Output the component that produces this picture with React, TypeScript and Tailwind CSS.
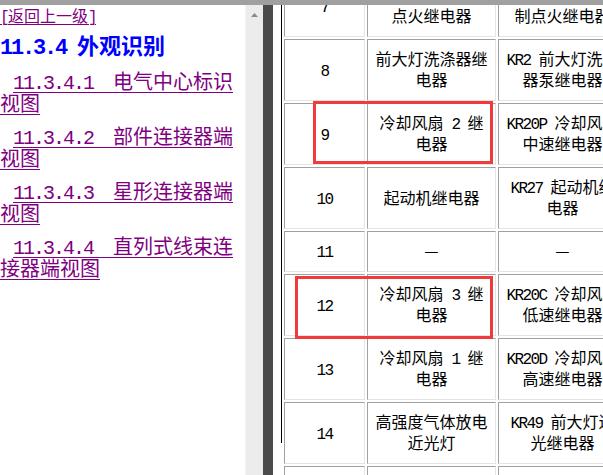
import React from 'react';

// half-width (ASCII) runs get a mono face squeezed to 0.5em, like the SimSun page.
// small line-height so the mono run never stretches the CJK line box
const T = ({ s }: { s: string }) => (
  <>
    {s.split(/([\x20-\x7e\u00a0]+)/).map((part, i) =>
      /^[\x20-\x7e\u00a0]+$/.test(part) ? (
        <span key={i} className="font-['Liberation_Mono',monospace] tracking-[-0.1em] leading-[0.7em]">
          {part}
        </span>
      ) : (
        part
      )
    )}
  </>
);

const links = [
  '11.3.4.1\u00a0\u00a0电气中心标识视图',
  '11.3.4.2\u00a0\u00a0部件连接器端视图',
  '11.3.4.3\u00a0\u00a0星形连接器端视图',
  '11.3.4.4\u00a0\u00a0直列式线束连接器端视图',
];

const rows: [string, string, string][] = [
  ['7', '发动机控制模块点火继电器', 'KR75 发动机控制点火继电器'],
  ['8', '前大灯洗涤器继电器', 'KR2 前大灯洗涤器泵继电器'],
  ['9', '冷却风扇 2 继电器', 'KR20P 冷却风扇中速继电器'],
  ['10', '起动机继电器', 'KR27 起动机继电器'],
  ['11', '—', '—'],
  ['12', '冷却风扇 3 继电器', 'KR20C 冷却风扇低速继电器'],
  ['13', '冷却风扇 1 继电器', 'KR20D 冷却风扇高速继电器'],
  ['14', '高强度气体放电近光灯', 'KR49 前大灯近光继电器'],
  ['15', '喇叭继电器', 'KR3 喇叭继电器'],
];

const cell =
  'border border-t-[#a0a0a0] border-l-[#a0a0a0] border-b-[#e4e4e4] border-r-[#e4e4e4] px-[6px] pt-[8px] pb-[10px] text-center align-middle';

export default function App() {
  return (
    <div className="relative w-[603px] h-[475px] overflow-hidden bg-white flex flex-col font-['Noto_Sans_CJK_SC',sans-serif] text-black">
      <div className="h-[5px] shrink-0 bg-[#a0a0a0]" />
      <div className="flex flex-1 min-h-0">
        {/* left frame */}
        <div className="w-[245px] shrink-0 overflow-hidden">
          <a className="block text-[16px] leading-[20px] text-[#800080] underline decoration-1 underline-offset-[2px] w-max">
            <T s="[返回上一级]" />
          </a>
          <h2 className="mt-[6px] text-[22px] leading-[26px] font-bold text-[#0000ff] whitespace-nowrap">
            <T s="11.3.4 外观识别" />
          </h2>
          <div className="mt-[13px] flex flex-col gap-[11px]">
            {links.map((l) => (
              <p key={l} className="indent-[13px] text-[20px] leading-[22px]">
                <a className="text-[#800080] underline decoration-1 underline-offset-[3px]">
                  <T s={l} />
                </a>
              </p>
            ))}
          </div>
        </div>
        <div className="w-[18px] shrink-0 bg-[#ececec] border-l border-[#f4f4f4] pt-[8px] flex justify-center">
          <svg width="7" height="4" viewBox="0 0 7 4">
            <path d="M3.5 0 L7 4 L0 4 Z" fill="#8a8a8a" />
          </svg>
        </div>
        <div className="w-[10px] shrink-0 bg-[#4b4b4b]" />
        {/* right frame */}
        <div className="flex-1 min-w-0 overflow-hidden">
          <div className="ml-[8px] h-full border-l border-black">
            <table className="-mt-[32px] table-fixed w-[347px] border-separate border-spacing-[2px] text-[16px] leading-[21px]">
              <tbody>
                {rows.map(([n, a, b]) => (
                  <tr key={n}>
                    <td className={`${cell} w-[81px]`}>
                      <T s={n} />
                    </td>
                    <td className={`${cell} w-[129px]`}>
                      <T s={a} />
                    </td>
                    <td className={`${cell} w-[129px]`}>
                      <T s={b} />
                    </td>
                  </tr>
                ))}
              </tbody>
            </table>
          </div>
        </div>
      </div>
      {/* red annotation boxes */}
      <div className="absolute left-[313px] top-[101px] w-[180px] h-[63px] border-[3px] border-[#ef3b3b]" />
      <div className="absolute left-[295px] top-[276px] w-[198px] h-[63px] border-[3px] border-[#ef3b3b]" />
    </div>
  );
}
